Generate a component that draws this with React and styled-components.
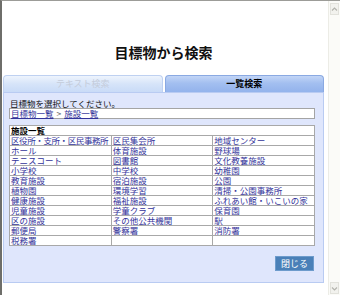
import React from 'react';
import styled, { createGlobalStyle } from 'styled-components';

const GlobalStyle = createGlobalStyle`
  body {
    margin: 0;
    background: #ffffff;
    font-family: "Noto Sans CJK JP", "Noto Sans", sans-serif;
  }
`;

const Frame = styled.div`
  width: 340px;
  height: 295px;
  box-sizing: border-box;
  border-top: 1px solid #9c9c98;
  border-left: 2px solid #6e6e6a;
  display: flex;
  overflow: hidden;
`;

const Page = styled.div`
  flex: 1;
  display: flex;
  flex-direction: column;
  padding: 0 4px 0 1px;
`;

const Title = styled.h1`
  margin: 0;
  padding-top: 43px;
  font-size: 14px;
  line-height: 16px;
  font-weight: bold;
  text-align: center;
  color: #111;
`;

const Tabs = styled.div`
  display: flex;
  gap: 2px;
  margin-top: 15px;
  height: 17px;
`;

const Tab = styled.div`
  flex: 1;
  box-sizing: border-box;
  border: 1px solid ${p => (p.$active ? '#8aa9e2' : '#bfd1f1')};
  border-bottom: none;
  border-radius: 4px 4px 0 0;
  background: ${p =>
    p.$active
      ? 'linear-gradient(#c2d5f6 0%, #a3bff0 45%, #93b3ec 100%)'
      : 'linear-gradient(#eef4fd 0%, #d6e4f9 50%, #c9dbf7 100%)'};
  color: ${p => (p.$active ? '#000' : '#c4ccda')};
  font-weight: ${p => (p.$active ? 'bold' : 'normal')};
  font-size: 9px;
  line-height: 16px;
  text-align: center;
`;

const Panel = styled.div`
  height: 191px;
  box-sizing: border-box;
  background: #dfe6fc;
  border: 1px solid #b9cbf2;
  padding: 5px 8px 9px 5px;
  display: flex;
  flex-direction: column;
`;

const Hint = styled.div`
  font-size: 8.5px;
  line-height: 10px;
  color: #111;
  padding-left: 1px;
`;

const Crumbs = styled.div`
  background: #fff;
  border: 1px solid #a4a4a4;
  height: 11px;
  box-sizing: border-box;
  font-size: 8.5px;
  line-height: 9px;
  padding-left: 1px;
  color: #555;
`;

const Link = styled.a`
  color: #33339a;
  text-decoration: underline;
  letter-spacing: ${p => (p.$tight ? '-0.4px' : 'normal')};
`;

const Sep = styled.span`
  margin: 0 3px;
  color: #666;
`;

const Grid = styled.table`
  margin-top: 6px;
  width: 100%;
  border-collapse: collapse;
  background: #fff;
  border: 1px solid #8c8c8c;
  table-layout: fixed;
`;

const Cell = styled.td`
  border: 1px solid #a8a8a8;
  height: 9px;
  padding: 0 0 0 1px;
  font-size: 8.5px;
  line-height: 9px;
  white-space: nowrap;
  overflow: hidden;
  font-weight: ${p => (p.$head ? 'bold' : 'normal')};
  color: #000;
`;

const Footer = styled.div`
  margin-top: 10px;
  display: flex;
  justify-content: flex-end;
  padding-right: 1px;
`;

const CloseButton = styled.button`
  width: 39px;
  height: 15px;
  padding: 0;
  border: 1px solid #6d9bcc;
  background: #4a80b8;
  color: #fff;
  font-family: inherit;
  font-size: 9px;
  line-height: 13px;
`;

const Scrollbar = styled.div`
  width: 11px;
  background: #fbfbf8;
  border-left: 1px solid #ecece6;
  display: flex;
  flex-direction: column;
  justify-content: space-between;
  padding: 2px 0 1px;
`;

const ScrollButton = styled.div`
  height: 10px;
  margin: 0 1px;
  background: #f2f2ee;
  border: 1px solid #e2e2dc;
  display: flex;
  align-items: center;
  justify-content: center;
`;

const Chevron = ({ down }) => (
  <svg width="7" height="5" viewBox="0 0 7 5">
    <path
      d={down ? 'M1 1.5 L3.5 4 L6 1.5' : 'M1 3.5 L3.5 1 L6 3.5'}
      fill="none"
      stroke="#b4b4ae"
      strokeWidth="1.2"
    />
  </svg>
);

const facilities = [
  ['区役所・支所・区民事務所', '区民集会所', '地域センター'],
  ['ホール', '体育施設', '野球場'],
  ['テニスコート', '図書館', '文化教養施設'],
  ['小学校', '中学校', '幼稚園'],
  ['教育施設', '宿泊施設', '公園'],
  ['植物園', '環境学習', '清掃・公園事務所'],
  ['健康施設', '福祉施設', 'ふれあい館・いこいの家'],
  ['児童施設', '学童クラブ', '保育園'],
  ['区の施設', 'その他公共機関', '駅'],
  ['郵便局', '警察署', '消防署'],
  ['税務署', '', ''],
];

export default function App() {
  return (
    <>
      <GlobalStyle />
      <Frame>
        <Page>
          <Title>目標物から検索</Title>
          <Tabs>
            <Tab>テキスト検索</Tab>
            <Tab $active>一覧検索</Tab>
          </Tabs>
          <Panel>
            <Hint>目標物を選択してください。</Hint>
            <Crumbs>
              <Link>目標物一覧</Link>
              <Sep>&gt;</Sep>
              <Link>施設一覧</Link>
            </Crumbs>
            <Grid>
              <tbody>
                <tr>
                  <Cell $head colSpan={3}>施設一覧</Cell>
                </tr>
                {facilities.map((row, i) => (
                  <tr key={i}>
                    {row.map((name, j) => (
                      <Cell key={j}>
                        {name && <Link $tight={name.length > 11}>{name}</Link>}
                      </Cell>
                    ))}
                  </tr>
                ))}
              </tbody>
            </Grid>
            <Footer>
              <CloseButton>閉じる</CloseButton>
            </Footer>
          </Panel>
        </Page>
        <Scrollbar>
          <ScrollButton><Chevron /></ScrollButton>
          <ScrollButton><Chevron down /></ScrollButton>
        </Scrollbar>
      </Frame>
    </>
  );
}
